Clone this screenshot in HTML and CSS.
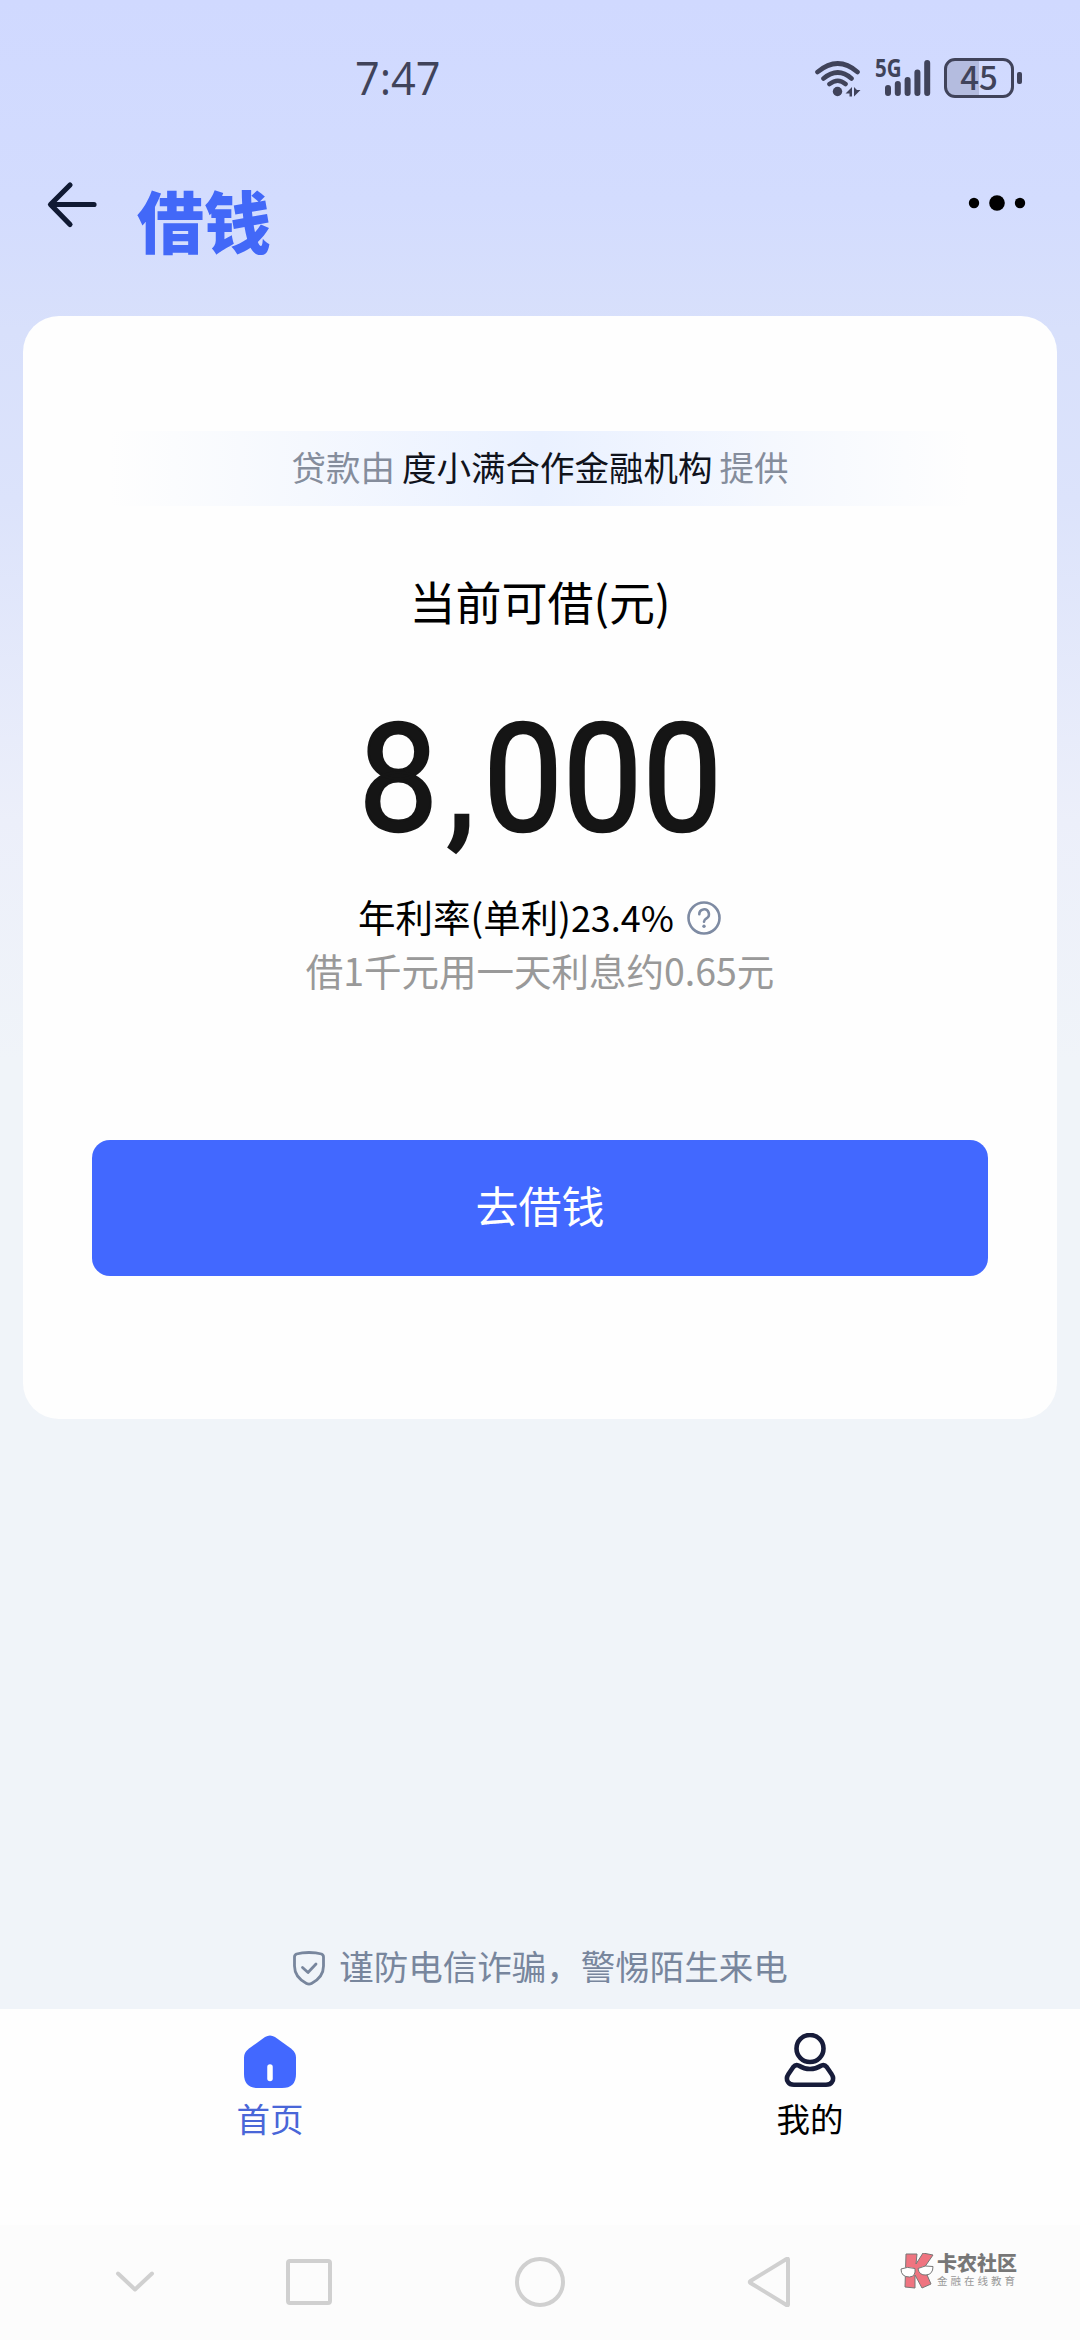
FILE: index.html
```html
<!DOCTYPE html>
<html lang="zh-CN">
<head>
<meta charset="utf-8">
<title>借钱</title>
<link rel="stylesheet" href="styles.css">
</head>
<body>
<div class="screen">
  <div class="status">
    <span class="time">7:47</span>
    <div class="status-icons">
      <svg class="wifi" width="48" height="40" viewBox="0 0 48 40" fill="none" stroke="#40435a" stroke-width="4.6" stroke-linecap="round">
        <path d="M3.500 12Q24 -5 43.500 12M9.500 18.500Q24 6.500 37.500 18.500M15.500 24Q24 17.500 31.500 24"/>
        <circle cx="23.500" cy="31.500" r="4.700" fill="#40435a" stroke="none"/>
        <path d="M38 27v9.500h-2.500v-3h-4zM40 27v9.500l6.500-6.500h-3.500z" fill="#40435a" stroke="none"/>
      </svg>
      <div class="signal">
        <span class="net">5G</span>
        <svg width="54" height="40" viewBox="0 0 54 40" stroke="#40435a" stroke-width="6" stroke-linecap="round"><path d="M11 30v5M20.800 26v9M30.600 22v13M40.400 14.500v20.500M50.200 5v30"/></svg>
      </div>
      <div class="battery"><span class="level">45</span></div>
      <span class="battery-tip"></span>
    </div>
  </div>
  <header class="header">
    <svg class="back" width="52" height="48" viewBox="0 0 52 48" fill="none" stroke="#101a33" stroke-width="5.200" stroke-linecap="round" stroke-linejoin="round"><path d="M24 4L4.500 23.500l19.500 20M5 23.500h43"/></svg>
    <h1>借钱</h1>
    <svg class="more" width="58" height="18" viewBox="0 0 58 18"><circle cx="6" cy="9" r="5.200"/><circle cx="29" cy="9" r="7.800"/><circle cx="52" cy="9" r="5.200"/></svg>
  </header>
  <main class="card">
    <p class="provider">贷款由<b>度小满合作金融机构</b>提供</p>
    <p class="label">当前可借(元)</p>
    <p class="amount">8<span class="comma">,</span>000</p>
    <p class="rate"><span>年利率(单利)<span class="num">23.4%</span></span>
      <svg width="36" height="36" viewBox="0 0 36 36" fill="none" stroke="#7e8ba3" stroke-width="2.600" stroke-linecap="round"><circle cx="18" cy="18" r="15.500"/><path d="M13.300 14.200a4.800 4.800 0 1 1 7.200 4.100c-1.700 1-2.500 1.700-2.500 3.400"/><circle cx="18" cy="26.300" r="1.700" fill="#7e8ba3" stroke="none"/></svg>
    </p>
    <p class="interest">借1千元用一天利息约0.65元</p>
    <button class="borrow">去借钱</button>
  </main>
  <p class="notice">
    <svg width="34" height="38" viewBox="0 0 34 38" fill="none" stroke="#78869d" stroke-width="2.800" stroke-linecap="round" stroke-linejoin="round"><path d="M17 2.500c5 0 9 .5 12.500 1.500 1.400.6 2 1.400 2 3V16c0 8-3.500 13-12 17.500q-2.500 1.300-5 0C6 29 2.500 24 2.500 16V7c0-1.600.6-2.400 2-3C8 3 12 2.500 17 2.500z"/><path d="M10.500 17.500l5.500 5 8-8.500"/></svg>
    <span>谨防电信诈骗，警惕陌生来电</span>
  </p>
  <nav class="tabs">
    <a class="tab active">
      <svg width="56" height="60" viewBox="0 0 56 60"><path d="M23 4q5-3 10 0l16 11.500q5 4 5 9V41q0 14-14 14H16Q2 55 2 41V24.500q0-5 5-9z" fill="#4268ff"/><path d="M28 34v11.500" stroke="#fff" stroke-width="5.500" stroke-linecap="round"/></svg>
      <span>首页</span>
    </a>
    <a class="tab">
      <svg width="56" height="60" viewBox="0 0 56 60" fill="none" stroke="#171c3a" stroke-width="4.600" stroke-linejoin="round"><circle cx="28" cy="15.500" r="13.500"/><path d="M16.500 32.500q11.500 7 23 0 3-1.300 5.200 1.500l4.800 7q3 4.500.5 8-1.800 2.800-6 2.800H12q-4.200 0-6-2.800-2.500-3.500.5-8l4.800-7q2.200-2.800 5.200-1.500z"/></svg>
      <span>我的</span>
    </a>
  </nav>
  <footer class="sysnav">
    <svg width="42" height="44" viewBox="0 0 42 44"><path d="M4 13.500l17 16 17-16"/></svg>
    <svg width="46" height="46" viewBox="0 0 46 46"><rect x="2" y="2" width="42" height="42" rx="2"/></svg>
    <svg width="50" height="50" viewBox="0 0 50 50"><circle cx="25" cy="25" r="23"/></svg>
    <svg width="46" height="50" viewBox="0 0 46 50"><path d="M41 2.500v45q0 1.500-1.500.5L3.500 26q-1.500-1 0-2L39.500 2q1.500-1 1.500.5z"/></svg>
    <div class="brand">
      <svg width="34" height="36" viewBox="0 0 34 36"><path d="M6 1l11 0-1 10 7-11 10 2-9 13 7 16-9 4-7-13v13L5 34z" fill="#ef7480" stroke="#777" stroke-width="1"/><path d="M1 16q6-3 14-.5 1 8-5.500 8.500Q1 24 1 16zM18 15.500q7-4 15-2 0 8-7 8.500-7 .5-8-6.500z" fill="#fff" stroke="#777" stroke-width="1"/></svg>
      <div class="brand-text"><strong>卡农社区</strong><small>金融在线教育</small></div>
    </div>
  </footer>
</div>
</body>
</html>
```

FILE: styles.css
```css
* { box-sizing: border-box; margin: 0; padding: 0; }
body { width: 1080px; height: 2340px; overflow: hidden; font-family: "Noto Sans CJK SC", sans-serif; color: #000; }
svg { display: block; flex: none; }
.screen { height: 2340px; display: flex; flex-direction: column; background: linear-gradient(#d0d9ff 0, #d3dcfe 200px, #d8e0fb 330px, #dce3fb 500px, #eceffa 820px, #f0f4f9 1060px, #f0f4f9 100%); }

.status { height: 156px; display: flex; justify-content: space-between; padding: 0 58px 0 355px; color: #40435a; }
.time { font: 500 46px/1 "Open Sans", sans-serif; padding-top: 54px; transform: scaleX(.94); transform-origin: 0 0; }
.status-icons { display: flex; align-items: flex-start; padding-top: 58px; }
.wifi { margin: 2px 13px 0 0; }
.signal { display: grid; margin-right: 13px; }
.signal > * { grid-area: 1 / 1; }
.net { font: 700 25px/1 "Open Sans", sans-serif; transform: scaleX(.82); transform-origin: 0 0; margin-top: -3px; }
.signal svg { margin-left: 2px; }
.battery { width: 70px; height: 40px; border: 3px solid #40435a; border-radius: 11px; background: linear-gradient(90deg, #b4bcdf 50%, transparent 50%); display: flex; align-items: center; justify-content: center; }
.level { font: 500 33px/1 "Noto Sans CJK SC", sans-serif; padding-bottom: 3px; }
.battery-tip { width: 5px; height: 12px; border-radius: 2px; background: #40435a; margin: 14px 0 0 3px; }

.header { height: 160px; display: flex; align-items: flex-start; padding: 0 54px 0 46px; }
.back { margin-top: 25px; }
h1 { font-size: 67px; line-height: 68px; font-weight: 900; color: #4268f8; margin: 29px auto 0 39px; }
.more { margin-top: 38px; }

.card { height: 1103px; margin: 0 23px; border-radius: 36px; background: #fefefe; display: flex; flex-direction: column; align-items: center; padding-top: 115px; white-space: nowrap; }
.provider { width: 860px; height: 75px; line-height: 70px; text-align: center; font-size: 34.500px; color: #858d9c; background: linear-gradient(90deg, rgba(232,240,255,0), #eaf1ff 50%, rgba(232,240,255,0)); }
.provider b { font-weight: 400; color: #10131c; margin: 0 7px; }
.label { font-size: 46px; line-height: 60px; margin-top: 64px; }
.amount { font: 400 150px/160px Roboto, sans-serif; color: #151515; -webkit-text-stroke: 2.500px #151515; transform: scaleX(.945); margin-top: 70px; }
.comma { margin: 0 9px; }
.rate { font-size: 37.500px; line-height: 54px; display: flex; align-items: center; gap: 12px; margin-top: 29px; }
.rate .num { font-size: 36px; }
.rate svg { margin-top: 3px; }
.interest { font-size: 37.500px; line-height: 54px; color: #999; }
.borrow { width: 896px; height: 136px; margin-top: 143px; border: 0; border-radius: 18px; background: #4268ff; color: #fff; font: 400 43px/1 "Noto Sans CJK SC", sans-serif; padding-bottom: 8px; }

.notice { height: 88px; margin-top: auto; display: flex; justify-content: center; align-items: center; gap: 13px; font-size: 34.500px; color: #78869d; white-space: nowrap; }
.notice svg { margin-top: 7px; }
.tabs { height: 216px; background: #fefefe; display: flex; }
.tab { flex: 1; display: flex; flex-direction: column; align-items: center; padding-top: 24px; font-size: 33.500px; line-height: 49px; }
.active { color: #4966d8; }
.sysnav { height: 115px; background: #fcfcfc; display: flex; align-items: center; padding: 0 62px 2px 114px; }
.sysnav > svg { fill: none; stroke: #d0d0d0; stroke-width: 4; stroke-linecap: round; stroke-linejoin: round; }
.sysnav > svg:nth-child(2) { margin-left: 130px; }
.sysnav > svg:nth-child(3) { margin-left: 183px; }
.sysnav > svg:nth-child(4) { margin-left: 182px; }
.brand { display: flex; align-items: center; gap: 3px; margin: 0 0 22px auto; }
.brand-text { display: flex; flex-direction: column; color: #777; white-space: nowrap; }
.brand strong { font-size: 20px; line-height: 20px; font-weight: 900; }
.brand small { font-size: 10.500px; line-height: 15px; letter-spacing: 3px; color: #999; }
```
